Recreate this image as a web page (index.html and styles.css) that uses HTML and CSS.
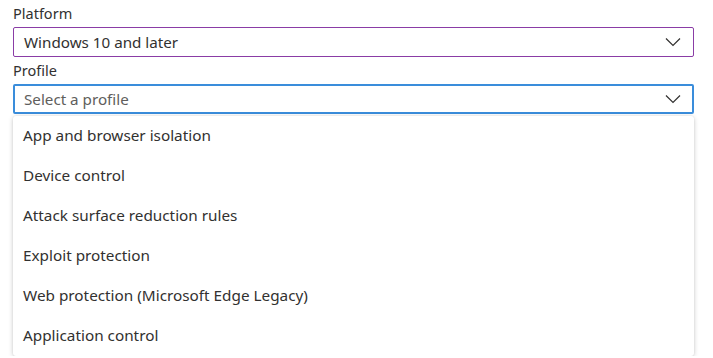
FILE: index.html
```html
<!DOCTYPE html>
<html lang="en">
<head>
    <meta charset="UTF-8">
    <title>Create profile</title>
    <link rel="stylesheet" href="styles.css">
</head>
<body>
<div class="form">
    <div class="field">
        <label class="label">Platform</label>
        <div class="select select-platform">
            <span class="value">Windows 10 and later</span>
            <svg class="chevron" width="16" height="10" viewBox="0 0 16 10"><path d="M1 1.5 L8 8.5 L15 1.5" fill="none" stroke="#323130" stroke-width="1.2"/></svg>
        </div>
    </div>
    <div class="field">
        <label class="label">Profile</label>
        <div class="select select-open">
            <span class="value placeholder">Select a profile</span>
            <svg class="chevron" width="16" height="10" viewBox="0 0 16 10"><path d="M1 1.5 L8 8.5 L15 1.5" fill="none" stroke="#323130" stroke-width="1.2"/></svg>
        </div>
        <ul class="menu">
            <li>App and browser isolation</li>
            <li>Device control</li>
            <li>Attack surface reduction rules</li>
            <li>Exploit protection</li>
            <li>Web protection (Microsoft Edge Legacy)</li>
            <li>Application control</li>
        </ul>
    </div>
</div>
</body>
</html>
```

FILE: styles.css
```css
* {
    margin: 0;
    padding: 0;
    list-style: none;
    box-sizing: border-box;
}

body {
    font-family: "Noto Sans", "Open Sans", sans-serif;
    color: #323130;
    background: #fff;
}

.form {
    width: 681px;
    margin: 3px 0 0 13px;
}

.label {
    display: block;
    font-size: 14.5px;
    line-height: 20px;
    height: 24px;
    color: #323130;
}

.select {
    height: 30px;
    display: flex;
    align-items: center;
    justify-content: space-between;
    padding: 0 10px;
    border-radius: 2px;
    font-size: 15.2px;
}

.select-platform {
    border: 1px solid #8a3ca6;
    margin-bottom: 3px;
}

.select-open {
    border: 2px solid #3a8ddb;
    padding: 0 9px;
}

.placeholder {
    color: #605e5c;
}

.chevron {
    display: block;
    margin-right: 2px;
}

.menu {
    margin-top: 2px;
    background: #fff;
    border-radius: 3px;
    box-shadow: 0 1px 5px rgba(0, 0, 0, 0.2), 0 0 2px rgba(0, 0, 0, 0.08);
}

.menu li {
    height: 40px;
    line-height: 38px;
    padding: 0 0 2px 10px;
    font-size: 15.3px;
}
```
